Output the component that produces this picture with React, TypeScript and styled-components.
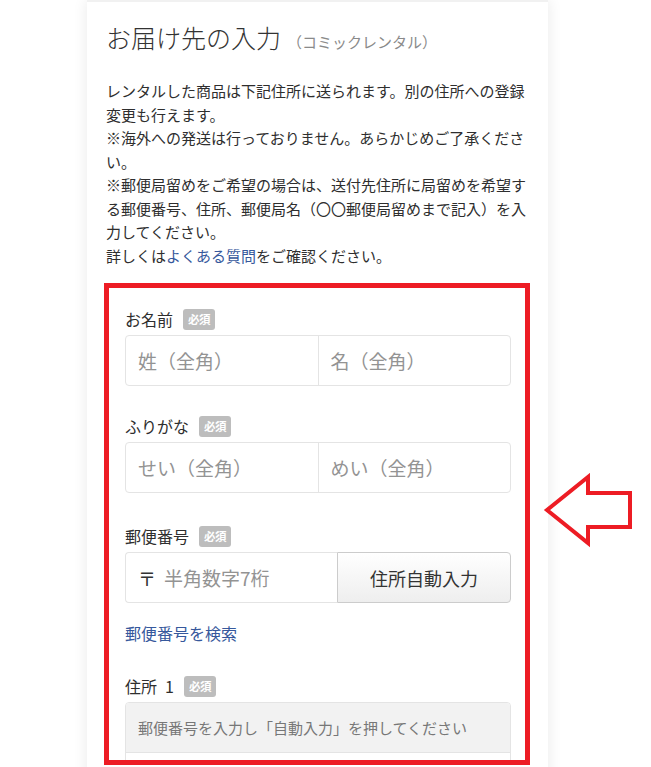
import React from "react";
import styled, { createGlobalStyle } from "styled-components";

const GlobalStyle = createGlobalStyle`
  html, body {
    margin: 0;
    padding: 0;
    background: #ffffff;
  }
  body {
    font-family: "Noto Sans CJK JP", "Noto Sans", sans-serif;
    color: #333333;
  }
  * { box-sizing: border-box; }
`;

const Page = styled.div`
  position: relative;
  width: 651px;
  min-height: 900px;
  overflow: hidden;
`;

const Card = styled.section`
  margin-left: 87px;
  width: 461px;
  min-height: 900px;
  background: #ffffff;
  border-top: 2px solid #f1f1f1;
  box-shadow: 0 0 14px rgba(0, 0, 0, 0.09);
  padding: 17px 18px 40px 19px;
`;

const TitleRow = styled.h1`
  margin: 0;
  display: flex;
  align-items: baseline;
  font-size: 25px;
  line-height: 36px;
  font-weight: 300;
  color: #333333;
`;

const SubTitle = styled.span`
  margin-left: 6px;
  font-size: 15px;
  font-weight: 400;
  color: #8a8a8a;
`;

const Intro = styled.p`
  margin: 19px 0 0;
  font-size: 15px;
  line-height: 23.5px;
  color: #2e2e2e;
`;

const Link = styled.a`
  color: #36589c;
  text-decoration: none;
`;

const FormFrame = styled.div`
  margin: 16px 0 0 -2px;
  width: 426px;
  height: 482px;
  border: 5px solid #ed1c24;
  padding: 19px 14px 0 16px;
  overflow: hidden;
`;

const Field = styled.div<{ $gap?: number }>`
  margin-bottom: ${(p) => p.$gap ?? 28}px;
`;

const LabelRow = styled.div`
  display: flex;
  align-items: center;
  gap: 10px;
  height: 24px;
  font-size: 16px;
  color: #2e2e2e;
  margin-bottom: 4px;
  white-space: pre;
`;

const Badge = styled.span`
  display: inline-flex;
  align-items: center;
  justify-content: center;
  width: 32px;
  height: 21px;
  border-radius: 3px;
  background: #bdbdbd;
  color: #ffffff;
  font-size: 11.5px;
  font-weight: 700;
  letter-spacing: -0.5px;
`;

const SplitBox = styled.div`
  display: flex;
  height: 51px;
  border: 1px solid #e4e4e4;
  border-radius: 4px;
  background: #ffffff;
  overflow: hidden;
`;

const TextInput = styled.input<{ $divider?: boolean }>`
  flex: 1;
  min-width: 0;
  height: 100%;
  border: none;
  border-left: ${(p) => (p.$divider ? "1px solid #e4e4e4" : "none")};
  outline: none;
  padding: 0 12px;
  font-family: "Noto Sans CJK JP", sans-serif;
  font-size: 19px;
  color: #333333;
  background: transparent;
  &::placeholder {
    color: #939393;
  }
`;

const PostalRow = styled.div`
  display: flex;
  height: 51px;
`;

const PostalInput = styled.label`
  width: 212px;
  display: flex;
  align-items: center;
  border: 1px solid #e4e4e4;
  border-right: none;
  border-radius: 4px 0 0 4px;
  padding-left: 12px;
`;

const PostalMark = styled.span`
  font-size: 18px;
  color: #333333;
  margin-right: 8px;
`;

const PostalField = styled.input`
  flex: 1;
  min-width: 0;
  border: none;
  outline: none;
  padding: 0;
  font-family: "Noto Sans CJK JP", sans-serif;
  font-size: 19px;
  background: transparent;
  &::placeholder {
    color: #939393;
  }
`;

const AutoButton = styled.button`
  flex: 1;
  border: 1px solid #cccccc;
  border-radius: 0 4px 4px 0;
  background: linear-gradient(#ffffff, #eeeeee);
  font-family: "Noto Sans CJK JP", sans-serif;
  font-size: 18px;
  color: #333333;
  padding: 0;
`;

const SearchLink = styled(Link)`
  display: block;
  font-size: 16px;
  line-height: 24px;
  margin: 18px 0 29px;
`;

const AddressBox = styled.div`
  border: 1px solid #e4e4e4;
  border-radius: 4px;
  overflow: hidden;
`;

const AddressNote = styled.div`
  height: 49px;
  display: flex;
  align-items: center;
  padding-left: 12px;
  background: #f2f2f2;
  font-size: 15px;
  color: #777777;
`;

const AddressLine = styled.div`
  height: 50px;
  border-top: 1px solid #e4e4e4;
  background: #ffffff;
`;

const ArrowMark = styled.svg`
  position: absolute;
  left: 543px;
  top: 473px;
`;

export default function App() {
  return (
    <>
      <GlobalStyle />
      <Page>
        <Card>
          <TitleRow>
            お届け先の入力<SubTitle>（コミックレンタル）</SubTitle>
          </TitleRow>
          <Intro>
            レンタルした商品は下記住所に送られます。別の住所への登録変更も行えます。
            <br />
            ※海外への発送は行っておりません。あらかじめご了承ください。
            <br />
            ※郵便局留めをご希望の場合は、送付先住所に局留めを希望する郵便番号、住所、郵便局名（〇〇郵便局留めまで記入）を入力してください。
            <br />
            詳しくは<Link href="#">よくある質問</Link>をご確認ください。
          </Intro>
          <FormFrame>
            <Field>
              <LabelRow>
                お名前<Badge>必須</Badge>
              </LabelRow>
              <SplitBox>
                <TextInput placeholder="姓（全角）" />
                <TextInput $divider placeholder="名（全角）" />
              </SplitBox>
            </Field>
            <Field $gap={31}>
              <LabelRow>
                ふりがな<Badge>必須</Badge>
              </LabelRow>
              <SplitBox>
                <TextInput placeholder="せい（全角）" />
                <TextInput $divider placeholder="めい（全角）" />
              </SplitBox>
            </Field>
            <Field $gap={0}>
              <LabelRow>
                郵便番号<Badge>必須</Badge>
              </LabelRow>
              <PostalRow>
                <PostalInput>
                  <PostalMark>〒</PostalMark>
                  <PostalField placeholder="半角数字7桁" />
                </PostalInput>
                <AutoButton type="button">住所自動入力</AutoButton>
              </PostalRow>
            </Field>
            <SearchLink href="#">郵便番号を検索</SearchLink>
            <Field $gap={0}>
              <LabelRow>
                {"住所\u20021"}<Badge>必須</Badge>
              </LabelRow>
              <AddressBox>
                <AddressNote>郵便番号を入力し「自動入力」を押してください</AddressNote>
                <AddressLine />
              </AddressBox>
            </Field>
          </FormFrame>
        </Card>
        <ArrowMark width="92" height="75" viewBox="0 0 92 75">
          <polygon
            points="4,37 45,4 45,20 87,20 87,54 45,54 45,70"
            fill="#ffffff"
            stroke="#ed1c24"
            strokeWidth="4"
            strokeLinejoin="miter"
          />
        </ArrowMark>
      </Page>
    </>
  );
}
